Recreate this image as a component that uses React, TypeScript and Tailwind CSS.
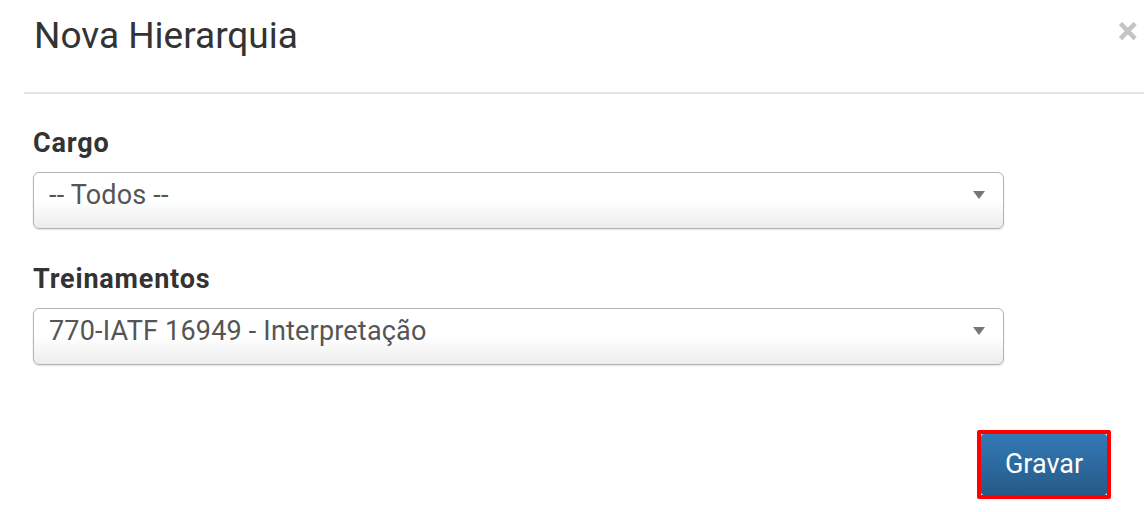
import { useState } from "react";

const font = { fontFamily: "Roboto, 'Noto Sans', sans-serif" };

const SelectBox = ({ value }: { value: string }) => (
  <div className="flex h-[57px] w-[971px] items-center justify-between rounded-[6px] border border-[#b4b4b4] bg-gradient-to-b from-white from-50% to-[#ececec] pb-[11px] pl-[15px] pr-[18px] shadow-[0_1px_2px_rgba(0,0,0,0.12)]">
    <span className="text-[27px] tracking-[0.2px] text-[#555]">{value}</span>
    <span className="h-0 w-0 border-x-[6px] border-t-[8px] border-x-transparent border-t-[#777]" />
  </div>
);

export default function App() {
  const [cargo] = useState("-- Todos --");
  const [treino] = useState("770-IATF 16949 - Interpretação");

  return (
    <div className="h-[512px] w-[1144px] overflow-hidden bg-white" style={font}>
      {/* Header */}
      <div className="ml-[24px] flex h-[94px] items-start justify-between border-b-2 border-[#e5e5e5] pl-[10px] pr-[6px] pt-[13px]">
        <h4 className="text-[37px] font-normal leading-[46px] text-[#333]">Nova Hierarquia</h4>
        <button className="-mt-[1px] text-[38px] font-bold leading-none text-[#c4c4c4]">×</button>
      </div>

      {/* Body */}
      <div className="flex flex-col pl-[33px] pt-[33px]">
        <label className="text-[27px] font-bold leading-[32px] tracking-[0.8px] text-[#333]">Cargo</label>
        <div className="mt-[13px]">
          <SelectBox value={cargo} />
        </div>
        <label className="mt-[34px] text-[27px] font-bold leading-[32px] tracking-[0.8px] text-[#333]">Treinamentos</label>
        <div className="mt-[13px]">
          <SelectBox value={treino} />
        </div>
      </div>

      {/* Footer */}
      <div className="flex justify-end pr-[33px] pt-[65px]">
        <div className="rounded-[2px] border-4 border-[#ff0000]">
          <button className="h-[61px] w-[126px] rounded-[3px] bg-gradient-to-b from-[#337ab7] to-[#265a88] text-[27px] text-white">
            Gravar
          </button>
        </div>
      </div>
    </div>
  );
}
